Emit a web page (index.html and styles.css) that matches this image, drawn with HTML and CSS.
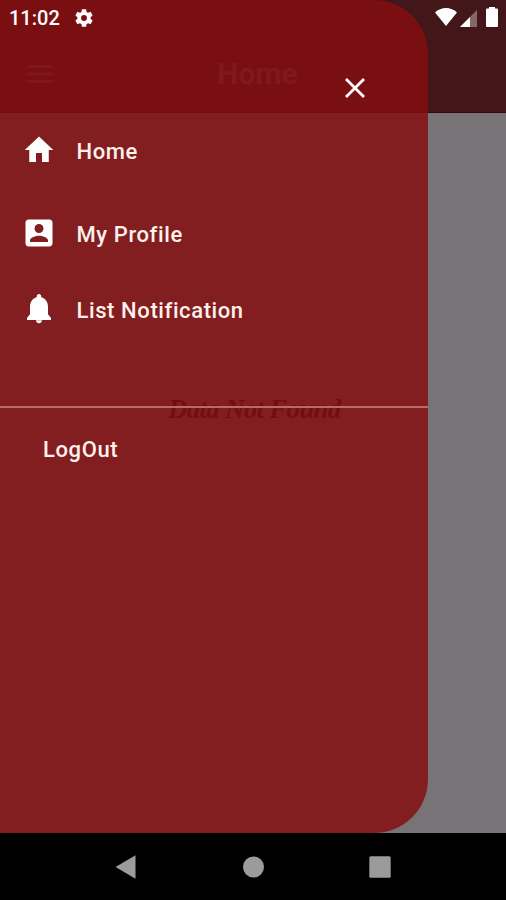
FILE: index.html
```html
<!DOCTYPE html>
<html lang="en">
<head>
  <meta charset="UTF-8" />
  <title>Home</title>
  <link rel="stylesheet" href="styles.css">
</head>
<body>
  <div class="screen">
    <!-- Page behind the drawer -->
    <header class="app-bar">
      <svg class="menu-icon" viewBox="0 0 26 18"><path d="M0 0h26v3H0zM0 7.500h26v3H0zM0 15h26v3H0z"/></svg>
      <div class="title">Home</div>
    </header>
    <main class="page">
      <p class="empty">Data Not Found</p>
    </main>

    <!-- Drawer -->
    <nav class="drawer">
      <button class="close">
        <svg viewBox="0 0 20 20"><path d="M1 1l18 18M19 1L1 19"/></svg>
      </button>
      <a class="item home">
        <svg class="icon" viewBox="0 0 24 24"><path d="M10 20v-6h4v6h4.500v-8h3L12 3 2.500 12h3v8z"/></svg>
        <span>Home</span>
      </a>
      <a class="item profile">
        <svg class="icon" viewBox="0 0 24 24"><path d="M3 5v14c0 1.1.89 2 2 2h14c1.1 0 2-.9 2-2V5c0-1.1-.9-2-2-2H5c-1.11 0-2 .9-2 2zm12 4c0 1.66-1.34 3-3 3s-3-1.34-3-3 1.34-3 3-3 3 1.34 3 3zm-9 8c0-2 4-3.1 6-3.1s6 1.1 6 3.1v1H6v-1z"/></svg>
        <span>My Profile</span>
      </a>
      <a class="item notification">
        <svg class="icon" viewBox="0 0 24 24"><path d="M12 21.500c1.1 0 2-.9 2-2h-4c0 1.1.89 2 2 2zm6-6v-5c0-3.07-1.64-5.64-4.5-6.32V3.500c0-.83-.67-1.5-1.5-1.5s-1.5.67-1.5 1.5v.68C7.63 4.860 6 7.420 6 10.500v5l-2 2.500v1.300h16V18l-2-2.500z"/></svg>
        <span>List Notification</span>
      </a>
      <a class="logout">LogOut</a>
    </nav>

    <!-- Status bar -->
    <div class="status-bar">
      <span class="time">11:02</span>
      <svg class="gear" viewBox="0 0 24 24"><path d="M19.14 12.94c.04-.3.06-.61.06-.94s-.02-.64-.07-.94l2.03-1.58c.18-.14.23-.41.12-.61l-1.92-3.32c-.12-.22-.37-.29-.59-.22l-2.39.96c-.5-.38-1.03-.7-1.62-.94l-.36-2.54c-.04-.24-.24-.41-.48-.41h-3.84c-.24 0-.43.17-.47.41l-.36 2.54c-.59.24-1.13.57-1.62.94l-2.39-.96c-.22-.08-.47 0-.59.22L2.74 8.87c-.12.21-.08.47.12.61l2.03 1.58c-.05.3-.09.63-.09.94s.02.64.07.94l-2.03 1.58c-.18.14-.23.41-.12.61l1.92 3.32c.12.22.37.29.59.22l2.39-.96c.5.38 1.03.7 1.62.94l.36 2.54c.05.24.24.41.48.41h3.84c.24 0 .44-.17.47-.41l.36-2.54c.59-.24 1.13-.56 1.62-.94l2.39.96c.22.08.47 0 .59-.22l1.92-3.32c.12-.22.07-.47-.12-.61l-2.01-1.58zM12 15.2A3.2 3.2 0 1 1 12 8.8a3.2 3.2 0 0 1 0 6.4z"/></svg>
      <svg class="wifi" viewBox="0 0 22 18"><path d="M11 18L0 4.5C3 1.5 7 0 11 0s8 1.500 11 4.500z"/></svg>
      <svg class="signal" viewBox="0 0 17 17"><path class="weak" d="M17 0v17H0z"/><path d="M10 7v10H0z"/></svg>
      <svg class="battery" viewBox="0 0 12 20"><path d="M3 0h6v1.500H11a1 1 0 0 1 1 1V19a1 1 0 0 1-1 1H1a1 1 0 0 1-1-1V2.500a1 1 0 0 1 1-1h2z"/></svg>
    </div>
  </div>

  <!-- Android buttons -->
  <footer class="nav-bar">
    <svg viewBox="0 0 24 24"><path d="M1.500 12L21.500 .3v23.400z"/></svg>
    <svg viewBox="0 0 24 24"><circle cx="12.500" cy="12" r="10.500"/></svg>
    <svg viewBox="0 0 24 24"><rect x="1.300" y="1.300" width="21.400" height="21.400" rx="1.500"/></svg>
  </footer>
</body>
</html>
```

FILE: styles.css
```css
* { box-sizing: border-box; }
body {
  margin: 0;
  width: 506px;
  height: 900px;
  overflow: hidden;
  background: #000;
  font-family: Roboto, sans-serif;
  color: white;
}
svg {
  display: block;
  fill: currentColor;
}

.screen {
  position: relative;
  height: 833px;
  background: #777377;
}

.app-bar {
  height: 113px;
  padding: 35px 27px 0;
  display: flex;
  align-items: center;
  background: #431719;
  border-bottom: 1px solid #35090c;
}
.menu-icon {
  width: 26px;
  height: 18px;
  color: #6b4448;
}
.title {
  flex: 1;
  padding-right: 17px;
  text-align: center;
  font-size: 30px;
  font-weight: bold;
  color: #6b5459;
}
.page {
  height: 720px;
}
.empty {
  margin: 0;
  padding: 279px 0 0 168px;
  font-family: "Liberation Serif", serif;
  font-size: 27px;
  font-weight: bold;
  font-style: italic;
  line-height: 34px;
  letter-spacing: -0.75px;
  color: #1c0e10;
}

.drawer {
  position: absolute;
  top: 0;
  left: 0;
  width: 428px;
  height: 833px;
  display: flex;
  flex-direction: column;
  background: rgba(132, 14, 15, 0.84);
  border-radius: 0 54px 54px 0;
}
.close {
  align-self: flex-end;
  width: 20px;
  height: 20px;
  margin: 78px 63px 0 0;
  padding: 0;
  border: none;
  background: none;
  color: white;
}
.close svg {
  stroke: currentColor;
  stroke-width: 2.8;
}
.item, .logout {
  display: flex;
  align-items: center;
  font-size: 22px;
  font-weight: 500;
  letter-spacing: 0.6px;
  color: #fff0ec;
}
.item {
  gap: 20px;
  height: 36px;
  padding-left: 20.5px;
}
.item span {
  padding-top: 2px;
}
.icon {
  width: 36px;
  height: 36px;
  color: white;
}
.home {
  margin-top: 34px;
}
.profile {
  margin-top: 47px;
}
.notification {
  margin-top: 40px;
}
.logout {
  margin-top: 79px;
  padding: 29px 43px;
  border-top: 2px solid #b8696a;
}

.status-bar {
  position: absolute;
  top: 0;
  left: 0;
  width: 100%;
  height: 36px;
  padding: 0 8px 0 9px;
  display: flex;
  align-items: center;
}
.time {
  font-size: 20px;
  font-weight: 500;
}
.gear {
  width: 22px;
  height: 22px;
  margin: -1px 0 0 13px;
}
.wifi {
  width: 22px;
  height: 18px;
  margin: -2px 0 0 auto;
}
.signal {
  width: 17px;
  height: 17px;
  margin: 0 9px 0 3px;
}
.weak {
  opacity: 0.35;
}
.battery {
  width: 12px;
  height: 20px;
  margin-top: -2px;
}

.nav-bar {
  height: 67px;
  display: flex;
  justify-content: center;
  align-items: center;
  gap: 103px;
  color: #9b9b9b;
}
.nav-bar svg {
  width: 24px;
  height: 24px;
}
```
